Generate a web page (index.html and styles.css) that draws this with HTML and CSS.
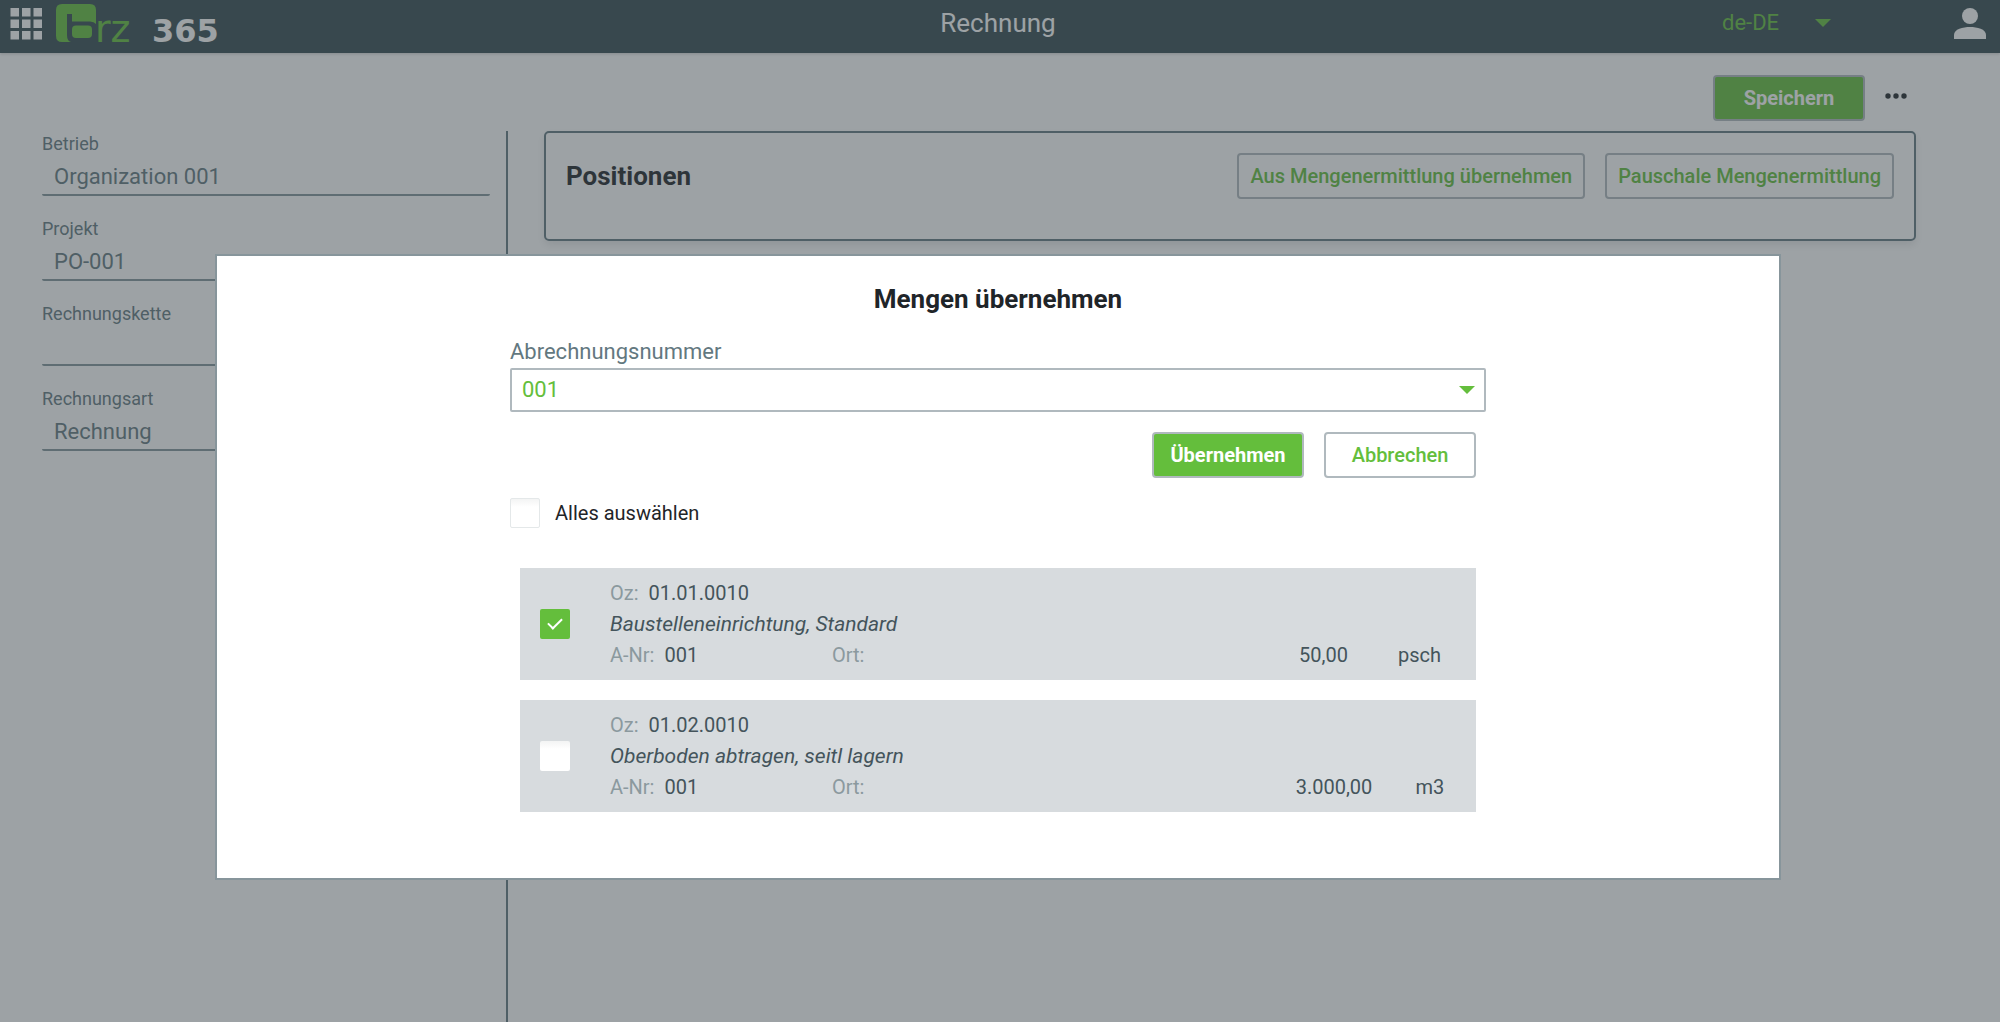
FILE: index.html
```html
<!DOCTYPE html>
<html lang="de">
<head>
  <meta charset="utf-8">
  <meta name="viewport" content="width=device-width, initial-scale=1">
  <title>Rechnung</title>
  <link rel="stylesheet" href="styles.css">
</head>
<body>
  <div class="page">
    <header class="topbar">
      <div class="brand">
        <button class="icon-button" type="button" aria-label="Apps">
          <svg width="32" height="32" viewBox="0 0 32 32" fill="currentColor" aria-hidden="true">
            <path d="M0.500 0h8.500v8.500H0.500zM12 0H20.500v8.500h-8.500zM23.500 0h8.500v8.500H23.500zM0.500 11.500h8.500V20H0.500zM12 11.500H20.500V20h-8.500zM23.500 11.500h8.500V20H23.500zM0.500 23h8.500v8.500H0.500zM12 23H20.500v8.500h-8.500zM23.500 23h8.500v8.500H23.500z"/>
          </svg>
        </button>
        <a class="logo" href="#" aria-label="brz 365">
          <svg width="190" height="53" viewBox="0 -4 190 53" aria-hidden="true">
            <path class="logo-green" d="M6 0H34Q40 0 40 6V20Q38 17.500 34 17.500H16V10H11V31Q11 37 15 38H6Q0 38 0 32V6Q0 0 6 0Z"/>
            <rect class="logo-green" x="16" y="21.500" width="20" height="12.500" rx="4"/>
            <text class="logo-rz" x="39" y="38">rz</text>
            <text class="logo-365" x="96" y="38">365</text>
          </svg>
        </a>
      </div>
      <h1 class="topbar-title">Rechnung</h1>
      <div class="account">
        <span class="select-wrap language">
          <select aria-label="Sprache"><option>de-DE</option></select>
        </span>
        <button class="icon-button" type="button" aria-label="Benutzer">
          <svg width="32" height="32" viewBox="0 0 32 32" fill="currentColor" aria-hidden="true">
            <circle cx="16" cy="8" r="8"/>
            <path d="M0 31V27C0 21 9 19 16 19S32 21 32 27V31Z"/>
          </svg>
        </button>
      </div>
    </header>

    <div class="toolbar">
      <button class="button button-primary" type="button">Speichern</button>
      <button class="icon-button more" type="button" aria-label="Mehr">
        <svg width="22" height="6" viewBox="0 0 22 6" fill="currentColor" aria-hidden="true">
          <circle cx="3" cy="3" r="2.700"/><circle cx="11" cy="3" r="2.700"/><circle cx="19" cy="3" r="2.700"/>
        </svg>
      </button>
    </div>

    <div class="content">
      <form class="details">
        <div class="field"><label for="betrieb">Betrieb</label><input id="betrieb" type="text" value="Organization 001" readonly></div>
        <div class="field"><label for="projekt">Projekt</label><input id="projekt" type="text" value="PO-001" readonly></div>
        <div class="field"><label for="kette">Rechnungskette</label><input id="kette" type="text" value="" readonly></div>
        <div class="field"><label for="art">Rechnungsart</label><input id="art" type="text" value="Rechnung" readonly></div>
      </form>
      <main class="main">
        <section class="card">
          <h2 class="heading">Positionen</h2>
          <div class="card-actions">
            <button class="button" type="button">Aus Mengenermittlung übernehmen</button>
            <button class="button" type="button">Pauschale Mengenermittlung</button>
          </div>
        </section>
      </main>
    </div>
  </div>

  <div class="backdrop">
    <div class="dialog" role="dialog" aria-modal="true" aria-labelledby="dialog-title">
      <h2 class="heading dialog-title" id="dialog-title">Mengen übernehmen</h2>
      <form class="dialog-form">
        <label class="select-label" for="nummer">Abrechnungsnummer</label>
        <span class="select-wrap number">
          <select id="nummer"><option>001</option></select>
        </span>
        <div class="dialog-actions">
          <button class="button button-primary" type="button">Übernehmen</button>
          <button class="button" type="button">Abbrechen</button>
        </div>
        <label class="select-all"><input class="check check-outlined" type="checkbox">Alles auswählen</label>
        <ul class="items">
          <li class="item">
            <input class="check" type="checkbox" aria-label="01.01.0010" checked>
            <div class="item-text">
              <div><span class="key">Oz:</span>01.01.0010</div>
              <div class="item-name">Baustelleneinrichtung, Standard</div>
              <div class="item-line">
                <div class="item-number"><span class="key">A-Nr:</span>001</div>
                <div class="item-place"><span class="key">Ort:</span></div>
                <div class="item-amount"><span>50,00</span><span>psch</span></div>
              </div>
            </div>
          </li>
          <li class="item">
            <input class="check" type="checkbox" aria-label="01.02.0010">
            <div class="item-text">
              <div><span class="key">Oz:</span>01.02.0010</div>
              <div class="item-name">Oberboden abtragen, seitl lagern</div>
              <div class="item-line">
                <div class="item-number"><span class="key">A-Nr:</span>001</div>
                <div class="item-place"><span class="key">Ort:</span></div>
                <div class="item-amount"><span>3.000,00</span><span>m3</span></div>
              </div>
            </div>
          </li>
        </ul>
      </form>
    </div>
  </div>
</body>
</html>
```

FILE: styles.css
```css
:root {
  --green: #64be3c;
  --slate: #354b51;
  --gray: #637880;
  --line: #b0b9be;
  --ink: #1f2529;
}

* {
  box-sizing: border-box;
}

body {
  margin: 0;
  font-family: Roboto, "Liberation Sans", sans-serif;
  font-size: 20px;
  line-height: 24px;
  color: var(--ink);
  background: #fff;
}

button,
input,
select {
  font: inherit;
}

h1,
h2,
ul {
  margin: 0;
  padding: 0;
}

.page {
  display: flex;
  flex-direction: column;
  min-height: 100vh;
}

/* Top bar */
.topbar {
  display: grid;
  grid-template-columns: 1fr auto 1fr;
  height: 53px;
  padding: 0 14px 0 10px;
  color: #fff;
  background: var(--slate);
  box-shadow: 0 1px 3px rgba(0, 0, 0, 0.2);
}

.brand {
  display: flex;
  gap: 14px;
}

.icon-button {
  display: flex;
  padding: 0;
  border: 0;
  color: inherit;
  background: none;
}

.topbar .icon-button {
  padding-top: 8px;
}

.logo svg {
  display: block;
}

.logo-green,
.logo-rz {
  fill: var(--green);
}

.logo-rz {
  font-family: "DejaVu Sans", sans-serif;
  font-size: 38px;
}

.logo-365 {
  font-family: "DejaVu Sans", sans-serif;
  font-size: 32px;
  font-weight: 700;
  fill: #fff;
}

.topbar-title {
  font-size: 26px;
  font-weight: 400;
  line-height: 46px;
}

.account {
  display: flex;
  justify-content: flex-end;
  gap: 112px;
}

/* Drop-downs */
.select-wrap {
  display: grid;
  align-items: center;
  color: var(--green);
}

.select-wrap > select,
.select-wrap::after {
  grid-area: 1 / 1;
}

.select-wrap::after {
  content: "";
  justify-self: end;
  width: 16px;
  height: 8px;
  margin-right: 11px;
  background: currentColor;
  clip-path: polygon(0 0, 100% 0, 50% 100%);
  pointer-events: none;
}

.select-wrap select {
  width: 100%;
  height: 44px;
  padding: 0 10px;
  border: 0;
  font-size: 22px;
  color: inherit;
  background: none;
  appearance: none;
}

.language {
  width: 130px;
  height: 46px;
}

.number select {
  border: 2px solid var(--line);
  border-radius: 2px;
}

/* Buttons */
.button {
  min-width: 152px;
  height: 46px;
  padding: 0 11px;
  border: 2px solid var(--line);
  border-radius: 4px;
  font-weight: 500;
  color: var(--green);
  background: #fff;
}

.button-primary {
  font-weight: 700;
  color: #fff;
  background: var(--green);
}

/* Page body */
.toolbar {
  display: flex;
  justify-content: flex-end;
  align-items: center;
  gap: 20px;
  padding: 22px 93px 10px 42px;
}

.more {
  padding-bottom: 4px;
}

.content {
  display: flex;
  flex: 1;
  gap: 36px;
  padding: 0 84px 0 42px;
}

.details {
  display: flex;
  flex-direction: column;
  gap: 20px;
  width: 466px;
  padding-right: 16px;
  border-right: 2px solid var(--gray);
}

.field {
  display: flex;
  flex-direction: column;
  color: var(--gray);
}

.field label {
  font-size: 18px;
  line-height: 25px;
}

.field input {
  width: 100%;
  height: 40px;
  padding: 2px 12px 0;
  border: 0;
  border-bottom: 2px solid #82959a;
  border-radius: 2px;
  font-size: 22px;
  color: inherit;
  background: none;
}

.main {
  flex: 1;
}

.card {
  display: flex;
  justify-content: space-between;
  padding: 20px 20px 40px;
  border: 2px solid var(--gray);
  border-radius: 5px;
  box-shadow: 0 4px 8px rgba(0, 0, 0, 0.1);
}

.heading {
  font-size: 26px;
  font-weight: 700;
  line-height: 46px;
}

.card-actions {
  display: flex;
  gap: 20px;
}

/* Dialog */
.backdrop {
  position: fixed;
  inset: 0;
  display: flex;
  justify-content: center;
  align-items: flex-start;
  padding: 254px 219px 0 215px;
  background: rgba(59, 69, 75, 0.5);
}

.dialog {
  flex: 1;
  display: flex;
  flex-direction: column;
  align-items: center;
  padding: 20px 0 66px;
  border: 2px solid #87959b;
  background: #fff;
}

.dialog-form {
  display: flex;
  flex-direction: column;
  width: 976px;
  max-width: 100%;
}

.select-label {
  margin-top: 14px;
  font-size: 22px;
  line-height: 32px;
  color: var(--gray);
}

.dialog-actions {
  display: flex;
  justify-content: flex-end;
  gap: 20px;
  padding: 20px 10px;
}

.select-all {
  display: flex;
  align-items: center;
  gap: 15px;
  line-height: 30px;
}

.check {
  display: grid;
  place-items: center;
  flex: none;
  width: 30px;
  height: 30px;
  margin: 0;
  border-radius: 2px;
  background: linear-gradient(#f3f4f4, #fff 8px);
  appearance: none;
}

.check-outlined {
  border: 1px solid #e4e8e9;
}

.check:checked {
  background: var(--green);
}

.check:checked::before {
  content: "";
  width: 6px;
  height: 12px;
  margin-bottom: 4px;
  border: solid #fff;
  border-width: 0 2px 2px 0;
  rotate: 45deg;
}

.items {
  display: flex;
  flex-direction: column;
  gap: 20px;
  padding: 40px 10px 0;
  list-style: none;
}

.item {
  display: flex;
  align-items: center;
  gap: 40px;
  height: 112px;
  padding: 0 10px 0 20px;
  color: #44545b;
  background: #d7dbde;
}

.item-text {
  flex: 1;
  line-height: 31px;
}

.key {
  margin-right: 10px;
  color: #8b999e;
}

.item-name {
  font-size: 21px;
  font-style: italic;
}

.item-line {
  display: flex;
}

.item-number {
  width: 222px;
}

.item-place {
  flex: 1;
}

.item-amount {
  display: flex;
  justify-content: space-around;
  width: 192px;
}
```
